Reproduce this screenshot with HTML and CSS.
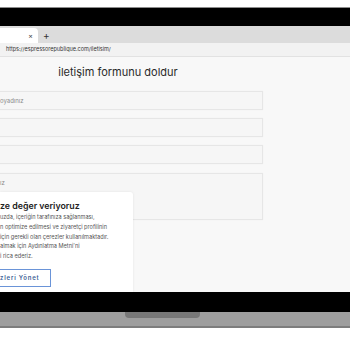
FILE: index.html
```html
<!DOCTYPE html>
<html lang="tr">
<head>
  <meta charset="UTF-8">
  <meta name="viewport" content="width=device-width, initial-scale=1.0">
  <title>iletişim</title>
  <link rel="stylesheet" href="styles.css">
</head>
<body>
  <div class="laptop">
    <div class="lid">
      <div class="screen">
        <div class="tab-bar">
          <div class="tab"><span class="close">×</span></div>
          <span class="new-tab">+</span>
        </div>
        <div class="address-bar">https://espressorepublique.com/iletisim/</div>
        <div class="page">
          <h1 class="title">iletişim formunu doldur</h1>
          <div class="form">
            <div class="field"><span class="ph">oyadınız</span></div>
            <div class="field"></div>
            <div class="field"></div>
            <div class="field area"><span class="ph">ız</span></div>
          </div>

          <div class="cookie">
            <h2 class="cookie-title">ze değer veriyoruz</h2>
            <p class="cookie-text">
              uzda, içeriğin tarafınıza sağlanması,<br>
              n optimize edilmesi ve ziyaretçi profilinin<br>
              için gerekli olan çerezler kullanılmaktadır.<br>
              almak için Aydınlatma Metni'ni<br>
              i rica ederiz.
            </p>
            <span class="cookie-btn">zleri Yönet</span>
          </div>
        </div>
      </div>
    </div>
    <div class="base">
      <span class="notch"></span>
    </div>
  </div>
</body>
</html>
```

FILE: styles.css
```css
* {margin:0; padding:0; box-sizing:border-box;}
body {background:#fff; font-family:Inter, "Noto Sans", sans-serif;}

.laptop {padding-top:7px;}
.lid {background:#000; border-top:1px solid #8c8c8c; padding:18px 0 20px;}
.screen {height:266px; display:flex; flex-direction:column; overflow:hidden;}

.tab-bar {height:17px; background:#dcdcdc; display:flex; align-items:flex-end;}
.tab {width:38px; height:15px; background:#fff; border-radius:0 4px 0 0; display:flex; justify-content:flex-end; align-items:center; padding-right:5px;}
.tab .close {font-size:7px; color:#444; line-height:1;}
.new-tab {font-size:10px; color:#333; line-height:15px; margin-left:5px;}

.address-bar {height:14px; background:#f2f2f2; border-bottom:1px solid #e2e2e2; font-size:5.5px; color:#333; line-height:13px; padding-left:6px;}

.page {flex:1; background:#f8f8f8; position:relative;}
.title {font-size:11px; font-weight:400; color:#2a2a2a; text-align:center; width:236px; margin-top:8px; line-height:14px;}
.form {width:263px; margin-top:12px; display:flex; flex-direction:column; gap:8px;}
.field {height:19px; background:#f6f6f6; border:1px solid #e6e6e6; border-left:none; box-shadow:0 0 1px rgba(0,0,0,0.05); display:flex; align-items:center;}
.field.area {height:47px; margin-top:1px; align-items:flex-start; padding-top:5px;}
.ph {font-size:6px; color:#8c8c8c;}

.cookie {position:absolute; left:0; top:135px; bottom:0; width:133px; background:#fff; border-radius:0 3px 0 0; box-shadow:0 0 3px rgba(0,0,0,0.08); padding-top:8px;}
.cookie-title {font-size:8.8px; font-weight:600; color:#222; line-height:12px;}
.cookie-text {font-size:5.6px; color:#555; line-height:9.8px; margin-top:1px; white-space:nowrap;}
.cookie-btn {display:block; width:51px; height:18px; margin-top:7px; border:1px solid #6a94d8; border-left:none; color:#3d5f96; font-size:6px; font-weight:600; letter-spacing:0.8px; line-height:16px;}

.base {height:16px; background:#9e9e9e; border-bottom:2px solid #7d7d7d; display:flex;}
.notch {width:75px; height:6px; margin-left:125px; background:#777; border-radius:0 0 4px 4px;}
```
